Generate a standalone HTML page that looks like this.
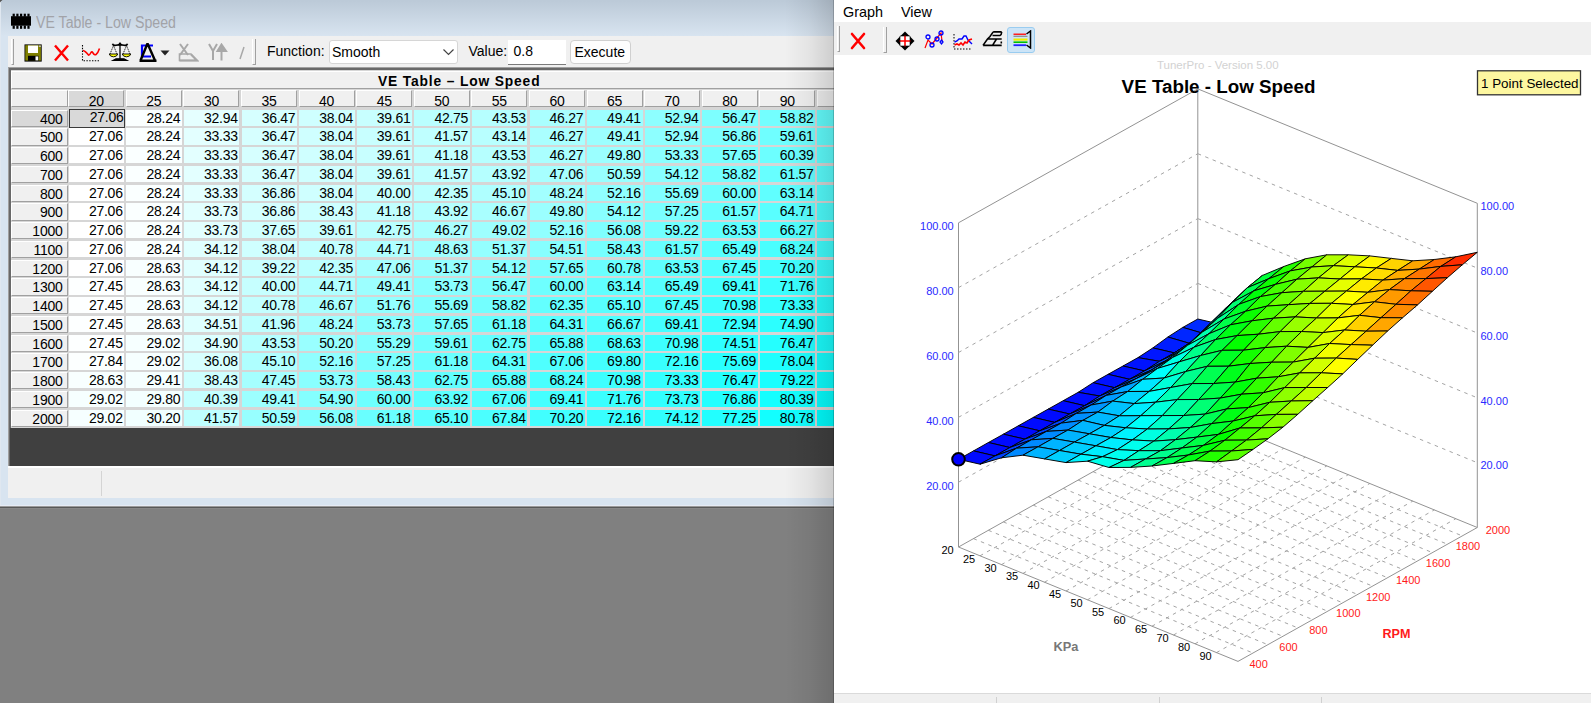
<!DOCTYPE html><html><head><meta charset="utf-8"><style>
*{box-sizing:border-box}
body{margin:0;width:1591px;height:703px;overflow:hidden;position:relative;background:#808080;font-family:"Liberation Sans",sans-serif;}
.a{position:absolute}
.c{position:absolute;height:16.3px;font-size:14px;letter-spacing:-0.25px;line-height:17.2px;text-align:right;padding-right:1.6px;color:#000;white-space:nowrap;overflow:hidden}
.h{position:absolute;background:#f0f0f0;border-top:1px solid #fff;border-left:1px solid #fff;border-right:1px solid #a0a0a0;border-bottom:1px solid #a0a0a0;font-size:14px;letter-spacing:-0.25px;line-height:20px;color:#000;white-space:nowrap;overflow:hidden}
</style></head><body>

<div class="a" style="left:0;top:0;width:834px;height:506px;background:#d8e4f0;overflow:hidden">
<div class="a" style="left:0;top:0;width:834px;height:36px;background:linear-gradient(#bccad8 1px,#d8e4f0)"></div>
<div class="a" style="left:0;top:0;width:1px;height:505px;background:#dfe7f0"></div>
<div class="a" style="left:0;top:0;width:3px;height:3px;background:radial-gradient(circle at 3px 3px,rgba(0,0,0,0) 2.5px,#555 3px)"></div>
<svg class="a" style="left:10px;top:13px" width="22" height="17" viewBox="0 0 22 17"><rect x="1" y="3.2" width="20" height="9.5" fill="#000"/><rect x="2.6" y="0.7" width="2.2" height="3" fill="#000"/><rect x="2.6" y="12.5" width="2.2" height="3.3" fill="#000"/><rect x="6.3" y="0.7" width="2.2" height="3" fill="#000"/><rect x="6.3" y="12.5" width="2.2" height="3.3" fill="#000"/><rect x="10.0" y="0.7" width="2.2" height="3" fill="#000"/><rect x="10.0" y="12.5" width="2.2" height="3.3" fill="#000"/><rect x="13.7" y="0.7" width="2.2" height="3" fill="#000"/><rect x="13.7" y="12.5" width="2.2" height="3.3" fill="#000"/><rect x="17.4" y="0.7" width="2.2" height="3" fill="#000"/><rect x="17.4" y="12.5" width="2.2" height="3.3" fill="#000"/></svg>
<div class="a" style="left:35.60px;top:12.53px;font-size:15.80px;line-height:20px;white-space:nowrap;color:#a2a3a8;transform:scaleX(0.897);transform-origin:0 0">VE Table - Low Speed</div>
<div class="a" style="left:8px;top:36px;width:826px;height:32px;background:#f0f0f0"></div>
<div class="a" style="left:11px;top:39px;width:3px;height:26px;border-left:1px solid #fff;border-right:1px solid #a0a0a0;border-bottom:1px solid #a0a0a0"></div>
<div class="a" style="left:252px;top:39px;width:4px;height:26px;border-left:1px solid #fff;border-right:1px solid #a0a0a0;border-bottom:1px solid #a0a0a0"></div>
<svg class="a" style="left:24px;top:43.5px" width="18" height="18" viewBox="0 0 18 18"><rect x="0.5" y="0.4" width="17.2" height="17.2" fill="#000"/><rect x="1.3" y="1.2" width="15.6" height="15.4" fill="#808000"/><rect x="4" y="1.5" width="10" height="7.5" fill="#fff"/><rect x="14.8" y="1.5" width="2" height="1.5" fill="#c0c0c0"/><rect x="4" y="11.8" width="10.6" height="5" fill="#000"/><rect x="11.5" y="12.4" width="2.7" height="4" fill="#fff"/></svg>
<svg class="a" style="left:53px;top:44px" width="17" height="18" viewBox="0 0 17 18"><path d="M2 1.5 L15 16.5 M15 1.5 L2 16.5" stroke="#ff0000" stroke-width="2.4"/></svg>
<svg class="a" style="left:81px;top:44px" width="20" height="18" viewBox="0 0 20 18"><path d="M1.5 1 V16.7 H19" fill="none" stroke="#000" stroke-width="1.1" stroke-dasharray="1.4 1.4"/><path d="M2 6.5 Q4 6.8 7.5 11 Q8.5 11.5 10 8.5 Q11 7 12 9 Q13.5 11.5 15 10.5 Q17 9 18.5 4.5" fill="none" stroke="#ff0000" stroke-width="1.6"/></svg>
<svg class="a" style="left:108px;top:41px" width="24" height="21" viewBox="0 0 24 21"><path d="M12 2.5 V19" stroke="#3a3a3a" stroke-width="1.7"/><path d="M12 1 L9.5 4.3 H14.5 Z" fill="#000"/><path d="M4.5 2.8 Q5 4.8 8 4.3 L12 3.6 L16 4.3 Q19 4.8 19.5 2.8" fill="none" stroke="#000" stroke-width="1.6"/><path d="M5.5 4.5 L1.8 13.5 M5.5 4.5 L9.2 13.5 M18.5 4.5 L14.8 13.5 M18.5 4.5 L22.2 13.5" stroke="#000" stroke-width="0.9" stroke-dasharray="1.2 0.8"/><path d="M1.2 13 H9.8 Q9 15.8 5.5 15.8 Q2 15.8 1.2 13 Z M14.2 13 H22.8 Q22 15.8 18.5 15.8 Q15 15.8 14.2 13 Z" fill="#ffff00" stroke="#000" stroke-width="0.9"/><path d="M5 19.5 H19 L16 17.8 H8 Z" fill="#000" stroke="#000" stroke-width="1.2"/></svg>
<svg class="a" style="left:138px;top:42.5px" width="34" height="20" viewBox="0 0 34 20"><path d="M15 2.5 H4 V13.5 H13" fill="none" stroke="#0000ff" stroke-width="2.2"/><path d="M9.5 0.5 L2.5 17.5 M9.5 0.5 L17 17.5 M1.5 17.8 H18.5" stroke="#000" stroke-width="2.4" fill="none"/><path d="M22.5 7.5 L31.5 7.5 L27 12.5 Z" fill="#222"/></svg>
<svg class="a" style="left:178px;top:43px" width="21" height="19" viewBox="0 0 21 19"><path d="M2 1 L10 12 M10 1 L2 12 M1.5 17.5 H19 L13 11.5" stroke="#a8a8a8" stroke-width="2" fill="none"/><path d="M1.5 11 V17.5 H19 L13 11 Z" fill="none" stroke="#a8a8a8" stroke-width="1.6"/></svg>
<svg class="a" style="left:207px;top:43px" width="21" height="19" viewBox="0 0 21 19"><path d="M2 1 L6 8 L10 1 M6 8 V17" stroke="#a8a8a8" stroke-width="2" fill="none"/><path d="M14.5 17.5 V5 M10.5 8 L14.5 1.5 L19 8 Z" stroke="#a8a8a8" stroke-width="2" fill="#a8a8a8"/></svg>
<svg class="a" style="left:238px;top:45px" width="8" height="16" viewBox="0 0 8 16"><path d="M6 2 L2 14" stroke="#a8a8a8" stroke-width="1.5"/></svg>
<div class="a" style="left:267.00px;top:42.15px;font-size:14.00px;line-height:18px;white-space:nowrap;">Function:</div>
<div class="a" style="left:329px;top:40px;width:129px;height:24px;background:#fff;border:1px solid #d6d6d6;border-radius:3px"></div>
<div class="a" style="left:332.00px;top:42.65px;font-size:14.00px;line-height:18px;white-space:nowrap;">Smooth</div>
<svg class="a" style="left:442px;top:48px" width="13" height="8"><path d="M1.5 1.5 L6.5 6.5 L11.5 1.5" fill="none" stroke="#444" stroke-width="1.2"/></svg>
<div class="a" style="left:468.50px;top:42.15px;font-size:14.00px;line-height:18px;white-space:nowrap;">Value:</div>
<div class="a" style="left:508px;top:40px;width:58px;height:25px;background:#fff;border-bottom:1.5px solid #7a7a7a"></div>
<div class="a" style="left:513.50px;top:42.15px;font-size:14.00px;line-height:18px;white-space:nowrap;">0.8</div>
<div class="a" style="left:570px;top:40px;width:61px;height:24px;background:#fdfdfd;border:1px solid #d0d0d0;border-radius:4px"></div>
<div class="a" style="left:574.50px;top:43.15px;font-size:14.00px;line-height:18px;white-space:nowrap;">Execute</div>
<div class="a" style="left:8px;top:67px;width:830px;height:401px;border-top:1.4px solid #a0a0a0;border-left:1.4px solid #a0a0a0;background:#696969"></div>
<div class="a" style="left:10.5px;top:70px;width:830px;height:398px;background:#d6d6d6"></div>
<div class="a" style="left:10px;top:428px;width:830px;height:38px;background:#404040"></div>
<div class="a" style="left:8px;top:466px;width:830px;height:2px;background:#fff"></div>
<div class="h" style="left:11px;top:71px;width:830px;height:18.2px"></div>
<div class="a" style="left:378.00px;top:72.92px;font-size:13.80px;line-height:17px;white-space:nowrap;font-weight:bold;letter-spacing:0.85px">VE Table &#8211; Low Speed</div>
<div class="h" style="left:11px;top:90.3px;width:56.5px;height:17.2px"></div>
<div class="h" style="left:68.30px;top:90.3px;width:56px;height:17.2px;background:#d9d9d9;text-align:center">20</div>
<div class="h" style="left:125.88px;top:90.3px;width:56px;height:17.2px;background:#f0f0f0;text-align:center">25</div>
<div class="h" style="left:183.46px;top:90.3px;width:56px;height:17.2px;background:#f0f0f0;text-align:center">30</div>
<div class="h" style="left:241.04px;top:90.3px;width:56px;height:17.2px;background:#f0f0f0;text-align:center">35</div>
<div class="h" style="left:298.62px;top:90.3px;width:56px;height:17.2px;background:#f0f0f0;text-align:center">40</div>
<div class="h" style="left:356.20px;top:90.3px;width:56px;height:17.2px;background:#f0f0f0;text-align:center">45</div>
<div class="h" style="left:413.78px;top:90.3px;width:56px;height:17.2px;background:#f0f0f0;text-align:center">50</div>
<div class="h" style="left:471.36px;top:90.3px;width:56px;height:17.2px;background:#f0f0f0;text-align:center">55</div>
<div class="h" style="left:528.94px;top:90.3px;width:56px;height:17.2px;background:#f0f0f0;text-align:center">60</div>
<div class="h" style="left:586.52px;top:90.3px;width:56px;height:17.2px;background:#f0f0f0;text-align:center">65</div>
<div class="h" style="left:644.10px;top:90.3px;width:56px;height:17.2px;background:#f0f0f0;text-align:center">70</div>
<div class="h" style="left:701.68px;top:90.3px;width:56px;height:17.2px;background:#f0f0f0;text-align:center">80</div>
<div class="h" style="left:759.26px;top:90.3px;width:56px;height:17.2px;background:#f0f0f0;text-align:center">90</div>
<div class="h" style="left:816.84px;top:90.3px;width:56px;height:17.2px;background:#f0f0f0;text-align:center"></div>
<div class="h" style="left:11px;top:109.70px;width:56.5px;height:17.2px;background:#d9d9d9;text-align:right;padding-right:4px;line-height:17.8px">400</div>
<div class="c" style="left:68.60px;top:109.20px;width:56.5px;height:18.4px;background:#d9d9d9;border:1.6px solid #3a3a3a;line-height:15.6px;padding-right:0.5px">27.06</div>
<div class="c" style="left:126.48px;top:109.70px;width:55.4px;background:#faffff">28.24</div>
<div class="c" style="left:184.06px;top:109.70px;width:55.4px;background:#e5ffff">32.94</div>
<div class="c" style="left:241.64px;top:109.70px;width:55.4px;background:#d6ffff">36.47</div>
<div class="c" style="left:299.22px;top:109.70px;width:55.4px;background:#cfffff">38.04</div>
<div class="c" style="left:356.80px;top:109.70px;width:55.4px;background:#c8ffff">39.61</div>
<div class="c" style="left:414.38px;top:109.70px;width:55.4px;background:#baffff">42.75</div>
<div class="c" style="left:471.96px;top:109.70px;width:55.4px;background:#b6ffff">43.53</div>
<div class="c" style="left:529.54px;top:109.70px;width:55.4px;background:#aaffff">46.27</div>
<div class="c" style="left:587.12px;top:109.70px;width:55.4px;background:#9cffff">49.41</div>
<div class="c" style="left:644.70px;top:109.70px;width:55.4px;background:#8dffff">52.94</div>
<div class="c" style="left:702.28px;top:109.70px;width:55.4px;background:#7dffff">56.47</div>
<div class="c" style="left:759.86px;top:109.70px;width:55.4px;background:#73ffff">58.82</div>
<div class="c" style="left:817.44px;top:109.70px;width:55.4px;background:#64ffff"></div>
<div class="h" style="left:11px;top:128.45px;width:56.5px;height:17.2px;background:#f0f0f0;text-align:right;padding-right:4px;line-height:17.8px">500</div>
<div class="c" style="left:68.90px;top:128.45px;width:55.4px;background:#ffffff">27.06</div>
<div class="c" style="left:126.48px;top:128.45px;width:55.4px;background:#faffff">28.24</div>
<div class="c" style="left:184.06px;top:128.45px;width:55.4px;background:#e3ffff">33.33</div>
<div class="c" style="left:241.64px;top:128.45px;width:55.4px;background:#d6ffff">36.47</div>
<div class="c" style="left:299.22px;top:128.45px;width:55.4px;background:#cfffff">38.04</div>
<div class="c" style="left:356.80px;top:128.45px;width:55.4px;background:#c8ffff">39.61</div>
<div class="c" style="left:414.38px;top:128.45px;width:55.4px;background:#bfffff">41.57</div>
<div class="c" style="left:471.96px;top:128.45px;width:55.4px;background:#b8ffff">43.14</div>
<div class="c" style="left:529.54px;top:128.45px;width:55.4px;background:#aaffff">46.27</div>
<div class="c" style="left:587.12px;top:128.45px;width:55.4px;background:#9cffff">49.41</div>
<div class="c" style="left:644.70px;top:128.45px;width:55.4px;background:#8dffff">52.94</div>
<div class="c" style="left:702.28px;top:128.45px;width:55.4px;background:#7cffff">56.86</div>
<div class="c" style="left:759.86px;top:128.45px;width:55.4px;background:#6fffff">59.61</div>
<div class="c" style="left:817.44px;top:128.45px;width:55.4px;background:#61ffff"></div>
<div class="h" style="left:11px;top:147.20px;width:56.5px;height:17.2px;background:#f0f0f0;text-align:right;padding-right:4px;line-height:17.8px">600</div>
<div class="c" style="left:68.90px;top:147.20px;width:55.4px;background:#ffffff">27.06</div>
<div class="c" style="left:126.48px;top:147.20px;width:55.4px;background:#faffff">28.24</div>
<div class="c" style="left:184.06px;top:147.20px;width:55.4px;background:#e3ffff">33.33</div>
<div class="c" style="left:241.64px;top:147.20px;width:55.4px;background:#d6ffff">36.47</div>
<div class="c" style="left:299.22px;top:147.20px;width:55.4px;background:#cfffff">38.04</div>
<div class="c" style="left:356.80px;top:147.20px;width:55.4px;background:#c8ffff">39.61</div>
<div class="c" style="left:414.38px;top:147.20px;width:55.4px;background:#c1ffff">41.18</div>
<div class="c" style="left:471.96px;top:147.20px;width:55.4px;background:#b6ffff">43.53</div>
<div class="c" style="left:529.54px;top:147.20px;width:55.4px;background:#aaffff">46.27</div>
<div class="c" style="left:587.12px;top:147.20px;width:55.4px;background:#9bffff">49.80</div>
<div class="c" style="left:644.70px;top:147.20px;width:55.4px;background:#8bffff">53.33</div>
<div class="c" style="left:702.28px;top:147.20px;width:55.4px;background:#78ffff">57.65</div>
<div class="c" style="left:759.86px;top:147.20px;width:55.4px;background:#6cffff">60.39</div>
<div class="c" style="left:817.44px;top:147.20px;width:55.4px;background:#5effff"></div>
<div class="h" style="left:11px;top:165.95px;width:56.5px;height:17.2px;background:#f0f0f0;text-align:right;padding-right:4px;line-height:17.8px">700</div>
<div class="c" style="left:68.90px;top:165.95px;width:55.4px;background:#ffffff">27.06</div>
<div class="c" style="left:126.48px;top:165.95px;width:55.4px;background:#faffff">28.24</div>
<div class="c" style="left:184.06px;top:165.95px;width:55.4px;background:#e3ffff">33.33</div>
<div class="c" style="left:241.64px;top:165.95px;width:55.4px;background:#d6ffff">36.47</div>
<div class="c" style="left:299.22px;top:165.95px;width:55.4px;background:#cfffff">38.04</div>
<div class="c" style="left:356.80px;top:165.95px;width:55.4px;background:#c8ffff">39.61</div>
<div class="c" style="left:414.38px;top:165.95px;width:55.4px;background:#bfffff">41.57</div>
<div class="c" style="left:471.96px;top:165.95px;width:55.4px;background:#b5ffff">43.92</div>
<div class="c" style="left:529.54px;top:165.95px;width:55.4px;background:#a7ffff">47.06</div>
<div class="c" style="left:587.12px;top:165.95px;width:55.4px;background:#97ffff">50.59</div>
<div class="c" style="left:644.70px;top:165.95px;width:55.4px;background:#88ffff">54.12</div>
<div class="c" style="left:702.28px;top:165.95px;width:55.4px;background:#73ffff">58.82</div>
<div class="c" style="left:759.86px;top:165.95px;width:55.4px;background:#67ffff">61.57</div>
<div class="c" style="left:817.44px;top:165.95px;width:55.4px;background:#5affff"></div>
<div class="h" style="left:11px;top:184.70px;width:56.5px;height:17.2px;background:#f0f0f0;text-align:right;padding-right:4px;line-height:17.8px">800</div>
<div class="c" style="left:68.90px;top:184.70px;width:55.4px;background:#ffffff">27.06</div>
<div class="c" style="left:126.48px;top:184.70px;width:55.4px;background:#faffff">28.24</div>
<div class="c" style="left:184.06px;top:184.70px;width:55.4px;background:#e3ffff">33.33</div>
<div class="c" style="left:241.64px;top:184.70px;width:55.4px;background:#d4ffff">36.86</div>
<div class="c" style="left:299.22px;top:184.70px;width:55.4px;background:#cfffff">38.04</div>
<div class="c" style="left:356.80px;top:184.70px;width:55.4px;background:#c6ffff">40.00</div>
<div class="c" style="left:414.38px;top:184.70px;width:55.4px;background:#bcffff">42.35</div>
<div class="c" style="left:471.96px;top:184.70px;width:55.4px;background:#afffff">45.10</div>
<div class="c" style="left:529.54px;top:184.70px;width:55.4px;background:#a2ffff">48.24</div>
<div class="c" style="left:587.12px;top:184.70px;width:55.4px;background:#90ffff">52.16</div>
<div class="c" style="left:644.70px;top:184.70px;width:55.4px;background:#81ffff">55.69</div>
<div class="c" style="left:702.28px;top:184.70px;width:55.4px;background:#6effff">60.00</div>
<div class="c" style="left:759.86px;top:184.70px;width:55.4px;background:#60ffff">63.14</div>
<div class="c" style="left:817.44px;top:184.70px;width:55.4px;background:#54ffff"></div>
<div class="h" style="left:11px;top:203.45px;width:56.5px;height:17.2px;background:#f0f0f0;text-align:right;padding-right:4px;line-height:17.8px">900</div>
<div class="c" style="left:68.90px;top:203.45px;width:55.4px;background:#ffffff">27.06</div>
<div class="c" style="left:126.48px;top:203.45px;width:55.4px;background:#faffff">28.24</div>
<div class="c" style="left:184.06px;top:203.45px;width:55.4px;background:#e2ffff">33.73</div>
<div class="c" style="left:241.64px;top:203.45px;width:55.4px;background:#d4ffff">36.86</div>
<div class="c" style="left:299.22px;top:203.45px;width:55.4px;background:#cdffff">38.43</div>
<div class="c" style="left:356.80px;top:203.45px;width:55.4px;background:#c1ffff">41.18</div>
<div class="c" style="left:414.38px;top:203.45px;width:55.4px;background:#b5ffff">43.92</div>
<div class="c" style="left:471.96px;top:203.45px;width:55.4px;background:#a9ffff">46.67</div>
<div class="c" style="left:529.54px;top:203.45px;width:55.4px;background:#9bffff">49.80</div>
<div class="c" style="left:587.12px;top:203.45px;width:55.4px;background:#88ffff">54.12</div>
<div class="c" style="left:644.70px;top:203.45px;width:55.4px;background:#7affff">57.25</div>
<div class="c" style="left:702.28px;top:203.45px;width:55.4px;background:#67ffff">61.57</div>
<div class="c" style="left:759.86px;top:203.45px;width:55.4px;background:#59ffff">64.71</div>
<div class="c" style="left:817.44px;top:203.45px;width:55.4px;background:#4dffff"></div>
<div class="h" style="left:11px;top:222.20px;width:56.5px;height:17.2px;background:#f0f0f0;text-align:right;padding-right:4px;line-height:17.8px">1000</div>
<div class="c" style="left:68.90px;top:222.20px;width:55.4px;background:#ffffff">27.06</div>
<div class="c" style="left:126.48px;top:222.20px;width:55.4px;background:#faffff">28.24</div>
<div class="c" style="left:184.06px;top:222.20px;width:55.4px;background:#e2ffff">33.73</div>
<div class="c" style="left:241.64px;top:222.20px;width:55.4px;background:#d0ffff">37.65</div>
<div class="c" style="left:299.22px;top:222.20px;width:55.4px;background:#c8ffff">39.61</div>
<div class="c" style="left:356.80px;top:222.20px;width:55.4px;background:#baffff">42.75</div>
<div class="c" style="left:414.38px;top:222.20px;width:55.4px;background:#aaffff">46.27</div>
<div class="c" style="left:471.96px;top:222.20px;width:55.4px;background:#9effff">49.02</div>
<div class="c" style="left:529.54px;top:222.20px;width:55.4px;background:#90ffff">52.16</div>
<div class="c" style="left:587.12px;top:222.20px;width:55.4px;background:#7fffff">56.08</div>
<div class="c" style="left:644.70px;top:222.20px;width:55.4px;background:#71ffff">59.22</div>
<div class="c" style="left:702.28px;top:222.20px;width:55.4px;background:#5effff">63.53</div>
<div class="c" style="left:759.86px;top:222.20px;width:55.4px;background:#52ffff">66.27</div>
<div class="c" style="left:817.44px;top:222.20px;width:55.4px;background:#46ffff"></div>
<div class="h" style="left:11px;top:240.95px;width:56.5px;height:17.2px;background:#f0f0f0;text-align:right;padding-right:4px;line-height:17.8px">1100</div>
<div class="c" style="left:68.90px;top:240.95px;width:55.4px;background:#ffffff">27.06</div>
<div class="c" style="left:126.48px;top:240.95px;width:55.4px;background:#faffff">28.24</div>
<div class="c" style="left:184.06px;top:240.95px;width:55.4px;background:#e0ffff">34.12</div>
<div class="c" style="left:241.64px;top:240.95px;width:55.4px;background:#cfffff">38.04</div>
<div class="c" style="left:299.22px;top:240.95px;width:55.4px;background:#c3ffff">40.78</div>
<div class="c" style="left:356.80px;top:240.95px;width:55.4px;background:#b1ffff">44.71</div>
<div class="c" style="left:414.38px;top:240.95px;width:55.4px;background:#a0ffff">48.63</div>
<div class="c" style="left:471.96px;top:240.95px;width:55.4px;background:#94ffff">51.37</div>
<div class="c" style="left:529.54px;top:240.95px;width:55.4px;background:#86ffff">54.51</div>
<div class="c" style="left:587.12px;top:240.95px;width:55.4px;background:#75ffff">58.43</div>
<div class="c" style="left:644.70px;top:240.95px;width:55.4px;background:#67ffff">61.57</div>
<div class="c" style="left:702.28px;top:240.95px;width:55.4px;background:#56ffff">65.49</div>
<div class="c" style="left:759.86px;top:240.95px;width:55.4px;background:#49ffff">68.24</div>
<div class="c" style="left:817.44px;top:240.95px;width:55.4px;background:#3fffff"></div>
<div class="h" style="left:11px;top:259.70px;width:56.5px;height:17.2px;background:#f0f0f0;text-align:right;padding-right:4px;line-height:17.8px">1200</div>
<div class="c" style="left:68.90px;top:259.70px;width:55.4px;background:#ffffff">27.06</div>
<div class="c" style="left:126.48px;top:259.70px;width:55.4px;background:#f8ffff">28.63</div>
<div class="c" style="left:184.06px;top:259.70px;width:55.4px;background:#e0ffff">34.12</div>
<div class="c" style="left:241.64px;top:259.70px;width:55.4px;background:#c9ffff">39.22</div>
<div class="c" style="left:299.22px;top:259.70px;width:55.4px;background:#bcffff">42.35</div>
<div class="c" style="left:356.80px;top:259.70px;width:55.4px;background:#a7ffff">47.06</div>
<div class="c" style="left:414.38px;top:259.70px;width:55.4px;background:#94ffff">51.37</div>
<div class="c" style="left:471.96px;top:259.70px;width:55.4px;background:#88ffff">54.12</div>
<div class="c" style="left:529.54px;top:259.70px;width:55.4px;background:#78ffff">57.65</div>
<div class="c" style="left:587.12px;top:259.70px;width:55.4px;background:#6affff">60.78</div>
<div class="c" style="left:644.70px;top:259.70px;width:55.4px;background:#5effff">63.53</div>
<div class="c" style="left:702.28px;top:259.70px;width:55.4px;background:#4dffff">67.45</div>
<div class="c" style="left:759.86px;top:259.70px;width:55.4px;background:#41ffff">70.20</div>
<div class="c" style="left:817.44px;top:259.70px;width:55.4px;background:#37ffff"></div>
<div class="h" style="left:11px;top:278.45px;width:56.5px;height:17.2px;background:#f0f0f0;text-align:right;padding-right:4px;line-height:17.8px">1300</div>
<div class="c" style="left:68.90px;top:278.45px;width:55.4px;background:#fdffff">27.45</div>
<div class="c" style="left:126.48px;top:278.45px;width:55.4px;background:#f8ffff">28.63</div>
<div class="c" style="left:184.06px;top:278.45px;width:55.4px;background:#e0ffff">34.12</div>
<div class="c" style="left:241.64px;top:278.45px;width:55.4px;background:#c6ffff">40.00</div>
<div class="c" style="left:299.22px;top:278.45px;width:55.4px;background:#b1ffff">44.71</div>
<div class="c" style="left:356.80px;top:278.45px;width:55.4px;background:#9cffff">49.41</div>
<div class="c" style="left:414.38px;top:278.45px;width:55.4px;background:#89ffff">53.73</div>
<div class="c" style="left:471.96px;top:278.45px;width:55.4px;background:#7dffff">56.47</div>
<div class="c" style="left:529.54px;top:278.45px;width:55.4px;background:#6effff">60.00</div>
<div class="c" style="left:587.12px;top:278.45px;width:55.4px;background:#60ffff">63.14</div>
<div class="c" style="left:644.70px;top:278.45px;width:55.4px;background:#56ffff">65.49</div>
<div class="c" style="left:702.28px;top:278.45px;width:55.4px;background:#44ffff">69.41</div>
<div class="c" style="left:759.86px;top:278.45px;width:55.4px;background:#3affff">71.76</div>
<div class="c" style="left:817.44px;top:278.45px;width:55.4px;background:#2fffff"></div>
<div class="h" style="left:11px;top:297.20px;width:56.5px;height:17.2px;background:#f0f0f0;text-align:right;padding-right:4px;line-height:17.8px">1400</div>
<div class="c" style="left:68.90px;top:297.20px;width:55.4px;background:#fdffff">27.45</div>
<div class="c" style="left:126.48px;top:297.20px;width:55.4px;background:#f8ffff">28.63</div>
<div class="c" style="left:184.06px;top:297.20px;width:55.4px;background:#e0ffff">34.12</div>
<div class="c" style="left:241.64px;top:297.20px;width:55.4px;background:#c3ffff">40.78</div>
<div class="c" style="left:299.22px;top:297.20px;width:55.4px;background:#a9ffff">46.67</div>
<div class="c" style="left:356.80px;top:297.20px;width:55.4px;background:#92ffff">51.76</div>
<div class="c" style="left:414.38px;top:297.20px;width:55.4px;background:#81ffff">55.69</div>
<div class="c" style="left:471.96px;top:297.20px;width:55.4px;background:#73ffff">58.82</div>
<div class="c" style="left:529.54px;top:297.20px;width:55.4px;background:#63ffff">62.35</div>
<div class="c" style="left:587.12px;top:297.20px;width:55.4px;background:#57ffff">65.10</div>
<div class="c" style="left:644.70px;top:297.20px;width:55.4px;background:#4dffff">67.45</div>
<div class="c" style="left:702.28px;top:297.20px;width:55.4px;background:#3dffff">70.98</div>
<div class="c" style="left:759.86px;top:297.20px;width:55.4px;background:#33ffff">73.33</div>
<div class="c" style="left:817.44px;top:297.20px;width:55.4px;background:#27ffff"></div>
<div class="h" style="left:11px;top:315.95px;width:56.5px;height:17.2px;background:#f0f0f0;text-align:right;padding-right:4px;line-height:17.8px">1500</div>
<div class="c" style="left:68.90px;top:315.95px;width:55.4px;background:#fdffff">27.45</div>
<div class="c" style="left:126.48px;top:315.95px;width:55.4px;background:#f8ffff">28.63</div>
<div class="c" style="left:184.06px;top:315.95px;width:55.4px;background:#deffff">34.51</div>
<div class="c" style="left:241.64px;top:315.95px;width:55.4px;background:#bdffff">41.96</div>
<div class="c" style="left:299.22px;top:315.95px;width:55.4px;background:#a2ffff">48.24</div>
<div class="c" style="left:356.80px;top:315.95px;width:55.4px;background:#89ffff">53.73</div>
<div class="c" style="left:414.38px;top:315.95px;width:55.4px;background:#78ffff">57.65</div>
<div class="c" style="left:471.96px;top:315.95px;width:55.4px;background:#69ffff">61.18</div>
<div class="c" style="left:529.54px;top:315.95px;width:55.4px;background:#5bffff">64.31</div>
<div class="c" style="left:587.12px;top:315.95px;width:55.4px;background:#50ffff">66.67</div>
<div class="c" style="left:644.70px;top:315.95px;width:55.4px;background:#44ffff">69.41</div>
<div class="c" style="left:702.28px;top:315.95px;width:55.4px;background:#35ffff">72.94</div>
<div class="c" style="left:759.86px;top:315.95px;width:55.4px;background:#2cffff">74.90</div>
<div class="c" style="left:817.44px;top:315.95px;width:55.4px;background:#20ffff"></div>
<div class="h" style="left:11px;top:334.70px;width:56.5px;height:17.2px;background:#f0f0f0;text-align:right;padding-right:4px;line-height:17.8px">1600</div>
<div class="c" style="left:68.90px;top:334.70px;width:55.4px;background:#fdffff">27.45</div>
<div class="c" style="left:126.48px;top:334.70px;width:55.4px;background:#f6ffff">29.02</div>
<div class="c" style="left:184.06px;top:334.70px;width:55.4px;background:#dcffff">34.90</div>
<div class="c" style="left:241.64px;top:334.70px;width:55.4px;background:#b6ffff">43.53</div>
<div class="c" style="left:299.22px;top:334.70px;width:55.4px;background:#99ffff">50.20</div>
<div class="c" style="left:356.80px;top:334.70px;width:55.4px;background:#83ffff">55.29</div>
<div class="c" style="left:414.38px;top:334.70px;width:55.4px;background:#6fffff">59.61</div>
<div class="c" style="left:471.96px;top:334.70px;width:55.4px;background:#62ffff">62.75</div>
<div class="c" style="left:529.54px;top:334.70px;width:55.4px;background:#54ffff">65.88</div>
<div class="c" style="left:587.12px;top:334.70px;width:55.4px;background:#48ffff">68.63</div>
<div class="c" style="left:644.70px;top:334.70px;width:55.4px;background:#3dffff">70.98</div>
<div class="c" style="left:702.28px;top:334.70px;width:55.4px;background:#2effff">74.51</div>
<div class="c" style="left:759.86px;top:334.70px;width:55.4px;background:#25ffff">76.47</div>
<div class="c" style="left:817.44px;top:334.70px;width:55.4px;background:#1affff"></div>
<div class="h" style="left:11px;top:353.45px;width:56.5px;height:17.2px;background:#f0f0f0;text-align:right;padding-right:4px;line-height:17.8px">1700</div>
<div class="c" style="left:68.90px;top:353.45px;width:55.4px;background:#fcffff">27.84</div>
<div class="c" style="left:126.48px;top:353.45px;width:55.4px;background:#f6ffff">29.02</div>
<div class="c" style="left:184.06px;top:353.45px;width:55.4px;background:#d7ffff">36.08</div>
<div class="c" style="left:241.64px;top:353.45px;width:55.4px;background:#afffff">45.10</div>
<div class="c" style="left:299.22px;top:353.45px;width:55.4px;background:#90ffff">52.16</div>
<div class="c" style="left:356.80px;top:353.45px;width:55.4px;background:#7affff">57.25</div>
<div class="c" style="left:414.38px;top:353.45px;width:55.4px;background:#69ffff">61.18</div>
<div class="c" style="left:471.96px;top:353.45px;width:55.4px;background:#5bffff">64.31</div>
<div class="c" style="left:529.54px;top:353.45px;width:55.4px;background:#4fffff">67.06</div>
<div class="c" style="left:587.12px;top:353.45px;width:55.4px;background:#43ffff">69.80</div>
<div class="c" style="left:644.70px;top:353.45px;width:55.4px;background:#38ffff">72.16</div>
<div class="c" style="left:702.28px;top:353.45px;width:55.4px;background:#29ffff">75.69</div>
<div class="c" style="left:759.86px;top:353.45px;width:55.4px;background:#1effff">78.04</div>
<div class="c" style="left:817.44px;top:353.45px;width:55.4px;background:#13ffff"></div>
<div class="h" style="left:11px;top:372.20px;width:56.5px;height:17.2px;background:#f0f0f0;text-align:right;padding-right:4px;line-height:17.8px">1800</div>
<div class="c" style="left:68.90px;top:372.20px;width:55.4px;background:#f8ffff">28.63</div>
<div class="c" style="left:126.48px;top:372.20px;width:55.4px;background:#f5ffff">29.41</div>
<div class="c" style="left:184.06px;top:372.20px;width:55.4px;background:#cdffff">38.43</div>
<div class="c" style="left:241.64px;top:372.20px;width:55.4px;background:#a5ffff">47.45</div>
<div class="c" style="left:299.22px;top:372.20px;width:55.4px;background:#89ffff">53.73</div>
<div class="c" style="left:356.80px;top:372.20px;width:55.4px;background:#75ffff">58.43</div>
<div class="c" style="left:414.38px;top:372.20px;width:55.4px;background:#62ffff">62.75</div>
<div class="c" style="left:471.96px;top:372.20px;width:55.4px;background:#54ffff">65.88</div>
<div class="c" style="left:529.54px;top:372.20px;width:55.4px;background:#49ffff">68.24</div>
<div class="c" style="left:587.12px;top:372.20px;width:55.4px;background:#3dffff">70.98</div>
<div class="c" style="left:644.70px;top:372.20px;width:55.4px;background:#33ffff">73.33</div>
<div class="c" style="left:702.28px;top:372.20px;width:55.4px;background:#25ffff">76.47</div>
<div class="c" style="left:759.86px;top:372.20px;width:55.4px;background:#19ffff">79.22</div>
<div class="c" style="left:817.44px;top:372.20px;width:55.4px;background:#0cffff"></div>
<div class="h" style="left:11px;top:390.95px;width:56.5px;height:17.2px;background:#f0f0f0;text-align:right;padding-right:4px;line-height:17.8px">1900</div>
<div class="c" style="left:68.90px;top:390.95px;width:55.4px;background:#f6ffff">29.02</div>
<div class="c" style="left:126.48px;top:390.95px;width:55.4px;background:#f3ffff">29.80</div>
<div class="c" style="left:184.06px;top:390.95px;width:55.4px;background:#c4ffff">40.39</div>
<div class="c" style="left:241.64px;top:390.95px;width:55.4px;background:#9cffff">49.41</div>
<div class="c" style="left:299.22px;top:390.95px;width:55.4px;background:#84ffff">54.90</div>
<div class="c" style="left:356.80px;top:390.95px;width:55.4px;background:#6effff">60.00</div>
<div class="c" style="left:414.38px;top:390.95px;width:55.4px;background:#5cffff">63.92</div>
<div class="c" style="left:471.96px;top:390.95px;width:55.4px;background:#4fffff">67.06</div>
<div class="c" style="left:529.54px;top:390.95px;width:55.4px;background:#44ffff">69.41</div>
<div class="c" style="left:587.12px;top:390.95px;width:55.4px;background:#3affff">71.76</div>
<div class="c" style="left:644.70px;top:390.95px;width:55.4px;background:#31ffff">73.73</div>
<div class="c" style="left:702.28px;top:390.95px;width:55.4px;background:#23ffff">76.86</div>
<div class="c" style="left:759.86px;top:390.95px;width:55.4px;background:#14ffff">80.39</div>
<div class="c" style="left:817.44px;top:390.95px;width:55.4px;background:#06ffff"></div>
<div class="h" style="left:11px;top:409.70px;width:56.5px;height:17.2px;background:#f0f0f0;text-align:right;padding-right:4px;line-height:17.8px">2000</div>
<div class="c" style="left:68.90px;top:409.70px;width:55.4px;background:#f6ffff">29.02</div>
<div class="c" style="left:126.48px;top:409.70px;width:55.4px;background:#f1ffff">30.20</div>
<div class="c" style="left:184.06px;top:409.70px;width:55.4px;background:#bfffff">41.57</div>
<div class="c" style="left:241.64px;top:409.70px;width:55.4px;background:#97ffff">50.59</div>
<div class="c" style="left:299.22px;top:409.70px;width:55.4px;background:#7fffff">56.08</div>
<div class="c" style="left:356.80px;top:409.70px;width:55.4px;background:#69ffff">61.18</div>
<div class="c" style="left:414.38px;top:409.70px;width:55.4px;background:#57ffff">65.10</div>
<div class="c" style="left:471.96px;top:409.70px;width:55.4px;background:#4bffff">67.84</div>
<div class="c" style="left:529.54px;top:409.70px;width:55.4px;background:#41ffff">70.20</div>
<div class="c" style="left:587.12px;top:409.70px;width:55.4px;background:#38ffff">72.16</div>
<div class="c" style="left:644.70px;top:409.70px;width:55.4px;background:#30ffff">74.12</div>
<div class="c" style="left:702.28px;top:409.70px;width:55.4px;background:#22ffff">77.25</div>
<div class="c" style="left:759.86px;top:409.70px;width:55.4px;background:#12ffff">80.78</div>
<div class="c" style="left:817.44px;top:409.70px;width:55.4px;background:#00ffff"></div>
<div class="a" style="left:8px;top:468px;width:826px;height:29.5px;background:#f0f0f0"></div>
<div class="a" style="left:101px;top:471px;width:1px;height:25px;background:#d4d4d4"></div>
</div>
<div class="a" style="left:0;top:505px;width:834px;height:1px;background:#e6ebf5"></div>
<div class="a" style="left:0;top:506px;width:834px;height:1px;background:#9a9a9a"></div>
<div class="a" style="left:0;top:507px;width:834px;height:1px;background:#585858"></div>
<div class="a" style="left:0;top:508px;width:834px;height:1px;background:#878787"></div>
<div class="a" style="left:785px;top:0;width:48px;height:703px;background:linear-gradient(to right,rgba(0,0,0,0),rgba(0,0,0,0.05) 50%,rgba(0,0,0,0.14))"></div>
<div class="a" style="left:833px;top:0;width:1px;height:703px;background:rgba(0,0,0,0.3)"></div>
<div class="a" style="left:834px;top:0;width:757px;height:703px;background:#fff;overflow:hidden">
<div class="a" style="left:9.00px;top:1.80px;font-size:15.00px;line-height:19px;white-space:nowrap;transform:scaleX(0.96);transform-origin:0 0">Graph</div>
<div class="a" style="left:66.50px;top:1.80px;font-size:15.00px;line-height:19px;white-space:nowrap;transform:scaleX(0.96);transform-origin:0 0">View</div>
<div class="a" style="left:0;top:22px;width:757px;height:32.5px;background:#f0f0f0"></div>
<div class="a" style="left:2.5px;top:26px;width:3.5px;height:26px;border-left:1px solid #fff;border-right:1px solid #a0a0a0;border-bottom:1px solid #a0a0a0"></div>
<div class="a" style="left:49px;top:26.5px;width:3.5px;height:26px;border-left:1px solid #fff;border-right:1px solid #a0a0a0;border-bottom:1px solid #a0a0a0"></div>
<svg class="a" style="left:16px;top:32px" width="16" height="18" viewBox="0 0 16 18"><path d="M2 2 L14 16 M14 2 L2 16" stroke="#ff0000" stroke-width="2.6" stroke-linecap="round"/></svg>
<svg class="a" style="left:61px;top:31px" width="20" height="20" viewBox="0 0 20 20"><path d="M10 0.5 L19.5 10 L10 19.5 L0.5 10 Z" fill="#000"/><rect x="5" y="5" width="10" height="10" fill="#fff"/><path d="M10 4.5 V15.5 M4.5 10 H15.5" stroke="#ff0000" stroke-width="1.6"/><path d="M5 5 H15 V15 H5 Z" fill="none" stroke="#000" stroke-width="0.6"/></svg>
<svg class="a" style="left:90px;top:30px" width="21" height="20" viewBox="0 0 21 20"><path d="M1 18 L4 10 L8 14 L13 8 L17 3 L18 11" fill="none" stroke="#ff0000" stroke-width="1.2"/><g fill="none" stroke="#0000ff" stroke-width="1.3"><circle cx="4" cy="7" r="2"/><circle cx="8" cy="15" r="2"/><circle cx="13" cy="9" r="2"/><circle cx="17" cy="3" r="2"/><path d="M17.5 10 L19 12 L17.5 14 L16 12 Z"/></g></svg>
<svg class="a" style="left:119px;top:33px" width="21" height="17" viewBox="0 0 21 17"><path d="M1 1 V16 H19" fill="none" stroke="#000" stroke-width="1" stroke-dasharray="1.5 1.5"/><path d="M1.5 9 L4 8 L6 6 L9 6 L11 3 L13 3 L15 7 L17 9 L19 11" fill="none" stroke="#0000ff" stroke-width="1.4"/><path d="M1.5 12 L4 11 L6 12 L8 10 L10 12 L12 9 L14 10 L16 7 L19 6" fill="none" stroke="#ff0000" stroke-width="1.6"/></svg>
<svg class="a" style="left:144px;top:26px" width="30" height="26" viewBox="0 0 30 26"><path d="M5 19.4 H23.7 M9 13 H23.7 M15.2 5.9 H23.7 M14.5 9.5 H22 Q23.5 9 23.7 6 M5 19.4 L9.5 13 L12 10.5 L15.2 5.9 M14.5 19.4 L18.5 13 M23.3 15.5 V17.5" fill="none" stroke="#000" stroke-width="1.6"/></svg>
<div class="a" style="left:173px;top:26.5px;width:28px;height:26px;background:#cce4f7;border:1px solid #99ccf0;border-radius:3px"></div>
<svg class="a" style="left:178px;top:30px" width="20" height="19" viewBox="0 0 20 19"><rect x="1.5" y="3.5" width="12.5" height="1.6" fill="#ff2020"/><rect x="1.5" y="5.8" width="14" height="1" fill="#808080"/><rect x="1.5" y="8.5" width="14" height="2.2" fill="#f0f000"/><rect x="1.5" y="11.4" width="14" height="1.6" fill="#00c000"/><rect x="1.5" y="14.3" width="12.5" height="1.8" fill="#2020ff"/><path d="M14.5 4 L18.5 1 V18 L14.5 15" fill="none" stroke="#000" stroke-width="1.5"/></svg>
<div class="a" style="left:0;top:693px;width:757px;height:10px;background:#f0f0f0;border-top:1.5px solid #dadada"></div>
<div class="a" style="left:162.0px;top:697px;width:1px;height:6px;background:#d0d0d0"></div>
<div class="a" style="left:324.7px;top:697px;width:1px;height:6px;background:#d0d0d0"></div>
<div class="a" style="left:487.0px;top:697px;width:1px;height:6px;background:#d0d0d0"></div>
</div>
<svg class="a" style="left:0;top:0" width="1591" height="703" viewBox="0 0 1591 703">
<g fill="none" stroke="#939393" stroke-width="1">
<line x1="958.5" y1="547.0" x2="958.5" y2="222.8" />
<line x1="1197.8" y1="413.1" x2="1197.8" y2="88.9" />
<line x1="1477.3" y1="527.5" x2="1477.3" y2="203.3" />
<line x1="958.5" y1="222.8" x2="1197.8" y2="88.9" />
<line x1="1197.8" y1="88.9" x2="1477.3" y2="203.3" />
<line x1="958.5" y1="482.2" x2="1197.8" y2="348.3" stroke-dasharray="3.5 4.5" stroke="#a4a4a4"/>
<line x1="1197.8" y1="348.3" x2="1477.3" y2="462.7" stroke-dasharray="3.5 4.5" stroke="#a4a4a4"/>
<line x1="958.5" y1="417.3" x2="1197.8" y2="283.4" stroke-dasharray="3.5 4.5" stroke="#a4a4a4"/>
<line x1="1197.8" y1="283.4" x2="1477.3" y2="397.8" stroke-dasharray="3.5 4.5" stroke="#a4a4a4"/>
<line x1="958.5" y1="352.5" x2="1197.8" y2="218.6" stroke-dasharray="3.5 4.5" stroke="#a4a4a4"/>
<line x1="1197.8" y1="218.6" x2="1477.3" y2="333.0" stroke-dasharray="3.5 4.5" stroke="#a4a4a4"/>
<line x1="958.5" y1="287.6" x2="1197.8" y2="153.7" stroke-dasharray="3.5 4.5" stroke="#a4a4a4"/>
<line x1="1197.8" y1="153.7" x2="1477.3" y2="268.1" stroke-dasharray="3.5 4.5" stroke="#a4a4a4"/>
<g stroke="#a4a4a4" stroke-dasharray="3.5 4.5">
<line x1="980.0" y1="555.8" x2="1219.3" y2="421.9" />
<line x1="1001.5" y1="564.6" x2="1240.8" y2="430.7" />
<line x1="1023.0" y1="573.4" x2="1262.3" y2="439.5" />
<line x1="1044.5" y1="582.2" x2="1283.8" y2="448.3" />
<line x1="1066.0" y1="591.0" x2="1305.3" y2="457.1" />
<line x1="1087.5" y1="599.8" x2="1326.8" y2="465.9" />
<line x1="1109.0" y1="608.6" x2="1348.3" y2="474.7" />
<line x1="1130.5" y1="617.4" x2="1369.8" y2="483.5" />
<line x1="1152.0" y1="626.2" x2="1391.3" y2="492.3" />
<line x1="1173.5" y1="635.0" x2="1412.8" y2="501.1" />
<line x1="1195.0" y1="643.8" x2="1434.3" y2="509.9" />
<line x1="1216.5" y1="652.6" x2="1455.8" y2="518.7" />
<line x1="973.5" y1="538.6" x2="1253.0" y2="653.0" />
<line x1="988.4" y1="530.3" x2="1267.9" y2="644.7" />
<line x1="1003.4" y1="521.9" x2="1282.9" y2="636.3" />
<line x1="1018.3" y1="513.5" x2="1297.8" y2="627.9" />
<line x1="1033.3" y1="505.2" x2="1312.8" y2="619.6" />
<line x1="1048.2" y1="496.8" x2="1327.7" y2="611.2" />
<line x1="1063.2" y1="488.4" x2="1342.7" y2="602.8" />
<line x1="1078.2" y1="480.1" x2="1357.7" y2="594.5" />
<line x1="1093.1" y1="471.7" x2="1372.6" y2="586.1" />
<line x1="1108.1" y1="463.3" x2="1387.6" y2="577.7" />
<line x1="1123.0" y1="454.9" x2="1402.5" y2="569.3" />
<line x1="1138.0" y1="446.6" x2="1417.5" y2="561.0" />
<line x1="1152.9" y1="438.2" x2="1432.4" y2="552.6" />
<line x1="1167.9" y1="429.8" x2="1447.4" y2="544.2" />
<line x1="1182.8" y1="421.5" x2="1462.3" y2="535.9" />
</g>
<line x1="958.5" y1="547.0" x2="1238.0" y2="661.4" />
<line x1="1238.0" y1="661.4" x2="1477.3" y2="527.5" />
<line x1="958.5" y1="547.0" x2="1197.8" y2="413.1" />
<line x1="1197.8" y1="413.1" x2="1477.3" y2="527.5" />
</g>
<g stroke="#000" stroke-width="0.95" stroke-linejoin="round">
<polygon points="1182.8,327.4 1204.3,333.7 1219.3,324.0 1197.8,319.0" fill="#002bff"/>
<polygon points="1167.9,337.0 1189.4,343.3 1204.3,333.7 1182.8,327.4" fill="#0026ff"/>
<polygon points="1204.3,333.7 1225.8,308.1 1240.8,295.9 1219.3,324.0" fill="#0095ff"/>
<polygon points="1152.9,347.9 1174.4,352.9 1189.4,343.3 1167.9,337.0" fill="#001dff"/>
<polygon points="1189.4,343.3 1210.9,322.8 1225.8,308.1 1204.3,333.7" fill="#0083ff"/>
<polygon points="1225.8,308.1 1247.3,287.7 1262.3,275.5 1240.8,295.9" fill="#00ffb9"/>
<polygon points="1138.0,357.6 1159.5,361.3 1174.4,352.9 1152.9,347.9" fill="#0016ff"/>
<polygon points="1174.4,352.9 1195.9,338.8 1210.9,322.8 1189.4,343.3" fill="#006dff"/>
<polygon points="1210.9,322.8 1232.4,302.4 1247.3,287.7 1225.8,308.1" fill="#00ffd5"/>
<polygon points="1247.3,287.7 1268.8,278.7 1283.8,266.5 1262.3,275.5" fill="#00ff39"/>
<polygon points="1123.0,366.0 1144.5,370.9 1159.5,361.3 1138.0,357.6" fill="#0013ff"/>
<polygon points="1159.5,361.3 1181.0,351.0 1195.9,338.8 1174.4,352.9" fill="#005cff"/>
<polygon points="1195.9,338.8 1217.4,318.4 1232.4,302.4 1210.9,322.8" fill="#00fffb"/>
<polygon points="1232.4,302.4 1253.9,290.8 1268.8,278.7 1247.3,287.7" fill="#00ff51"/>
<polygon points="1268.8,278.7 1290.3,270.9 1305.3,258.8 1283.8,266.5" fill="#24ff00"/>
<polygon points="1108.1,374.3 1129.6,379.3 1144.5,370.9 1123.0,366.0" fill="#0011ff"/>
<polygon points="1144.5,370.9 1166.0,360.7 1181.0,351.0 1159.5,361.3" fill="#0053ff"/>
<polygon points="1181.0,351.0 1202.5,331.9 1217.4,318.4 1195.9,338.8" fill="#00e2ff"/>
<polygon points="1217.4,318.4 1238.9,304.3 1253.9,290.8 1232.4,302.4" fill="#00ff70"/>
<polygon points="1253.9,290.8 1275.4,284.4 1290.3,270.9 1268.8,278.7" fill="#0eff00"/>
<polygon points="1290.3,270.9 1311.8,267.0 1326.8,254.8 1305.3,258.8" fill="#74ff00"/>
<polygon points="1093.1,382.7 1114.6,387.7 1129.6,379.3 1108.1,374.3" fill="#0011ff"/>
<polygon points="1129.6,379.3 1151.1,370.3 1166.0,360.7 1144.5,370.9" fill="#004eff"/>
<polygon points="1166.0,360.7 1187.5,345.3 1202.5,331.9 1181.0,351.0" fill="#00ceff"/>
<polygon points="1202.5,331.9 1224.0,319.0 1238.9,304.3 1217.4,318.4" fill="#00ff91"/>
<polygon points="1238.9,304.3 1260.4,296.6 1275.4,284.4 1253.9,290.8" fill="#00ff0a"/>
<polygon points="1275.4,284.4 1296.9,279.2 1311.8,267.0 1290.3,270.9" fill="#5dff00"/>
<polygon points="1311.8,267.0 1333.3,265.7 1348.3,254.8 1326.8,254.8" fill="#b0ff00"/>
<polygon points="1078.2,392.3 1099.7,396.0 1114.6,387.7 1093.1,382.7" fill="#0010ff"/>
<polygon points="1114.6,387.7 1136.1,378.7 1151.1,370.3 1129.6,379.3" fill="#004cff"/>
<polygon points="1151.1,370.3 1172.6,357.5 1187.5,345.3 1166.0,360.7" fill="#00beff"/>
<polygon points="1187.5,345.3 1209.0,333.7 1224.0,319.0 1202.5,331.9" fill="#00ffb0"/>
<polygon points="1224.0,319.0 1245.5,311.3 1260.4,296.6 1238.9,304.3" fill="#00ff28"/>
<polygon points="1260.4,296.6 1281.9,292.7 1296.9,279.2 1275.4,284.4" fill="#45ff00"/>
<polygon points="1296.9,279.2 1318.4,277.9 1333.3,265.7 1311.8,267.0" fill="#9dff00"/>
<polygon points="1333.3,265.7 1354.8,266.8 1369.8,255.9 1348.3,254.8" fill="#dfff00"/>
<polygon points="1063.2,400.7 1084.7,405.7 1099.7,396.0 1078.2,392.3" fill="#000cff"/>
<polygon points="1099.7,396.0 1121.2,387.0 1136.1,378.7 1114.6,387.7" fill="#004cff"/>
<polygon points="1136.1,378.7 1157.6,368.4 1172.6,357.5 1151.1,370.3" fill="#00b4ff"/>
<polygon points="1172.6,357.5 1194.1,347.2 1209.0,333.7 1187.5,345.3" fill="#00ffcc"/>
<polygon points="1209.0,333.7 1230.5,324.8 1245.5,311.3 1224.0,319.0" fill="#00ff49"/>
<polygon points="1245.5,311.3 1267.0,306.1 1281.9,292.7 1260.4,296.6" fill="#29ff00"/>
<polygon points="1281.9,292.7 1303.4,291.3 1318.4,277.9 1296.9,279.2" fill="#85ff00"/>
<polygon points="1318.4,277.9 1339.9,279.0 1354.8,266.8 1333.3,265.7" fill="#ceff00"/>
<polygon points="1354.8,266.8 1376.3,268.0 1391.3,258.4 1369.8,255.9" fill="#fff700"/>
<polygon points="1048.2,409.1 1069.7,414.0 1084.7,405.7 1063.2,400.7" fill="#000aff"/>
<polygon points="1084.7,405.7 1106.2,395.4 1121.2,387.0 1099.7,396.0" fill="#004aff"/>
<polygon points="1121.2,387.0 1142.7,379.3 1157.6,368.4 1136.1,378.7" fill="#00adff"/>
<polygon points="1157.6,368.4 1179.1,361.9 1194.1,347.2 1172.6,357.5" fill="#00ffe4"/>
<polygon points="1194.1,347.2 1215.6,339.5 1230.5,324.8 1209.0,333.7" fill="#00ff68"/>
<polygon points="1230.5,324.8 1252.0,320.8 1267.0,306.1 1245.5,311.3" fill="#0aff00"/>
<polygon points="1267.0,306.1 1288.5,304.7 1303.4,291.3 1281.9,292.7" fill="#6aff00"/>
<polygon points="1303.4,291.3 1324.9,291.2 1339.9,279.0 1318.4,277.9" fill="#b7ff00"/>
<polygon points="1339.9,279.0 1361.4,278.9 1376.3,268.0 1354.8,266.8" fill="#f9ff00"/>
<polygon points="1376.3,268.0 1397.8,270.4 1412.8,260.8 1391.3,258.4" fill="#ffd300"/>
<polygon points="1033.3,417.4 1054.8,422.4 1069.7,414.0 1048.2,409.1" fill="#000aff"/>
<polygon points="1069.7,414.0 1091.2,405.0 1106.2,395.4 1084.7,405.7" fill="#0047ff"/>
<polygon points="1106.2,395.4 1127.7,391.5 1142.7,379.3 1121.2,387.0" fill="#00a4ff"/>
<polygon points="1142.7,379.3 1164.2,378.0 1179.1,361.9 1157.6,368.4" fill="#00fffe"/>
<polygon points="1179.1,361.9 1200.6,355.5 1215.6,339.5 1194.1,347.2" fill="#00ff8a"/>
<polygon points="1215.6,339.5 1237.1,335.6 1252.0,320.8 1230.5,324.8" fill="#00ff16"/>
<polygon points="1252.0,320.8 1273.5,318.2 1288.5,304.7 1267.0,306.1" fill="#4cff00"/>
<polygon points="1288.5,304.7 1310.0,303.4 1324.9,291.2 1303.4,291.3" fill="#9fff00"/>
<polygon points="1324.9,291.2 1346.4,291.1 1361.4,278.9 1339.9,279.0" fill="#e6ff00"/>
<polygon points="1361.4,278.9 1382.9,280.1 1397.8,270.4 1376.3,268.0" fill="#ffdc00"/>
<polygon points="1397.8,270.4 1419.3,269.1 1434.3,259.5 1412.8,260.8" fill="#ffa600"/>
<polygon points="1018.3,425.8 1039.8,430.8 1054.8,422.4 1033.3,417.4" fill="#000aff"/>
<polygon points="1054.8,422.4 1076.3,413.4 1091.2,405.0 1069.7,414.0" fill="#0045ff"/>
<polygon points="1091.2,405.0 1112.7,401.1 1127.7,391.5 1106.2,395.4" fill="#009cff"/>
<polygon points="1127.7,391.5 1149.2,391.4 1164.2,378.0 1142.7,379.3" fill="#00e6ff"/>
<polygon points="1164.2,378.0 1185.7,371.5 1200.6,355.5 1179.1,361.9" fill="#00ffb2"/>
<polygon points="1200.6,355.5 1222.1,350.3 1237.1,335.6 1215.6,339.5" fill="#00ff3b"/>
<polygon points="1237.1,335.6 1258.6,334.2 1273.5,318.2 1252.0,320.8" fill="#2aff00"/>
<polygon points="1273.5,318.2 1295.0,316.9 1310.0,303.4 1288.5,304.7" fill="#85ff00"/>
<polygon points="1310.0,303.4 1331.5,303.3 1346.4,291.1 1324.9,291.2" fill="#d1ff00"/>
<polygon points="1346.4,291.1 1367.9,292.3 1382.9,280.1 1361.4,278.9" fill="#ffeb00"/>
<polygon points="1382.9,280.1 1404.4,278.7 1419.3,269.1 1397.8,270.4" fill="#ffad00"/>
<polygon points="1419.3,269.1 1440.8,266.4 1455.8,256.8 1434.3,259.5" fill="#ff6b00"/>
<polygon points="1003.4,434.2 1024.9,439.1 1039.8,430.8 1018.3,425.8" fill="#000aff"/>
<polygon points="1039.8,430.8 1061.3,423.1 1076.3,413.4 1054.8,422.4" fill="#0043ff"/>
<polygon points="1076.3,413.4 1097.8,412.1 1112.7,401.1 1091.2,405.0" fill="#0095ff"/>
<polygon points="1112.7,401.1 1134.2,403.6 1149.2,391.4 1127.7,391.5" fill="#00d3ff"/>
<polygon points="1149.2,391.4 1170.7,387.5 1185.7,371.5 1164.2,378.0" fill="#00ffd8"/>
<polygon points="1185.7,371.5 1207.2,366.3 1222.1,350.3 1200.6,355.5" fill="#00ff63"/>
<polygon points="1222.1,350.3 1243.6,350.2 1258.6,334.2 1237.1,335.6" fill="#03ff00"/>
<polygon points="1258.6,334.2 1280.1,331.6 1295.0,316.9 1273.5,318.2" fill="#64ff00"/>
<polygon points="1295.0,316.9 1316.5,318.0 1331.5,303.3 1310.0,303.4" fill="#b7ff00"/>
<polygon points="1331.5,303.3 1353.0,304.5 1367.9,292.3 1346.4,291.1" fill="#feff00"/>
<polygon points="1367.9,292.3 1389.4,289.6 1404.4,278.7 1382.9,280.1" fill="#ffb900"/>
<polygon points="1404.4,278.7 1425.9,278.6 1440.8,266.4 1419.3,269.1" fill="#ff7600"/>
<polygon points="1440.8,266.4 1462.3,264.8 1477.3,252.3 1455.8,256.8" fill="#ff2c00"/>
<polygon points="988.4,442.5 1009.9,447.5 1024.9,439.1 1003.4,434.2" fill="#000aff"/>
<polygon points="1024.9,439.1 1046.4,431.4 1061.3,423.1 1039.8,430.8" fill="#0042ff"/>
<polygon points="1061.3,423.1 1082.8,420.4 1097.8,412.1 1076.3,413.4" fill="#008fff"/>
<polygon points="1097.8,412.1 1119.3,415.8 1134.2,403.6 1112.7,401.1" fill="#00c3ff"/>
<polygon points="1134.2,403.6 1155.7,402.2 1170.7,387.5 1149.2,391.4" fill="#00fff7"/>
<polygon points="1170.7,387.5 1192.2,383.6 1207.2,366.3 1185.7,371.5" fill="#00ff8e"/>
<polygon points="1207.2,366.3 1228.7,366.2 1243.6,350.2 1222.1,350.3" fill="#00ff24"/>
<polygon points="1243.6,350.2 1265.1,347.6 1280.1,331.6 1258.6,334.2" fill="#3cff00"/>
<polygon points="1280.1,331.6 1301.6,331.5 1316.5,318.0 1295.0,316.9" fill="#98ff00"/>
<polygon points="1316.5,318.0 1338.0,317.9 1353.0,304.5 1331.5,303.3" fill="#e4ff00"/>
<polygon points="1353.0,304.5 1374.5,301.8 1389.4,289.6 1367.9,292.3" fill="#ffcc00"/>
<polygon points="1389.4,289.6 1410.9,290.8 1425.9,278.6 1404.4,278.7" fill="#ff8500"/>
<polygon points="1425.9,278.6 1447.4,277.7 1462.3,264.8 1440.8,266.4" fill="#ff3f00"/>
<polygon points="973.5,450.9 995.0,455.9 1009.9,447.5 988.4,442.5" fill="#000aff"/>
<polygon points="1009.9,447.5 1031.4,439.8 1046.4,431.4 1024.9,439.1" fill="#0042ff"/>
<polygon points="1046.4,431.4 1067.9,430.1 1082.8,420.4 1061.3,423.1" fill="#008cff"/>
<polygon points="1082.8,420.4 1104.3,425.4 1119.3,415.8 1097.8,412.1" fill="#00b9ff"/>
<polygon points="1119.3,415.8 1140.8,415.7 1155.7,402.2 1134.2,403.6" fill="#00edff"/>
<polygon points="1155.7,402.2 1177.2,399.6 1192.2,383.6 1170.7,387.5" fill="#00ffb7"/>
<polygon points="1192.2,383.6 1213.7,383.5 1228.7,366.2 1207.2,366.3" fill="#00ff51"/>
<polygon points="1228.7,366.2 1250.2,363.5 1265.1,347.6 1243.6,350.2" fill="#13ff00"/>
<polygon points="1265.1,347.6 1286.6,346.2 1301.6,331.5 1280.1,331.6" fill="#76ff00"/>
<polygon points="1301.6,331.5 1323.1,332.6 1338.0,317.9 1316.5,318.0" fill="#c5ff00"/>
<polygon points="1338.0,317.9 1359.5,315.3 1374.5,301.8 1353.0,304.5" fill="#ffe400"/>
<polygon points="1374.5,301.8 1396.0,304.3 1410.9,290.8 1389.4,289.6" fill="#ff9a00"/>
<polygon points="1410.9,290.8 1432.4,291.3 1447.4,277.7 1425.9,278.6" fill="#ff5600"/>
<polygon points="958.5,459.3 980.0,464.2 995.0,455.9 973.5,450.9" fill="#000aff"/>
<polygon points="995.0,455.9 1016.5,448.2 1031.4,439.8 1009.9,447.5" fill="#0042ff"/>
<polygon points="1031.4,439.8 1052.9,438.4 1067.9,430.1 1046.4,431.4" fill="#008aff"/>
<polygon points="1067.9,430.1 1089.4,433.8 1104.3,425.4 1082.8,420.4" fill="#00b6ff"/>
<polygon points="1104.3,425.4 1125.8,427.8 1140.8,415.7 1119.3,415.8" fill="#00daff"/>
<polygon points="1140.8,415.7 1162.3,415.6 1177.2,399.6 1155.7,402.2" fill="#00ffdc"/>
<polygon points="1177.2,399.6 1198.7,399.5 1213.7,383.5 1192.2,383.6" fill="#00ff7e"/>
<polygon points="1213.7,383.5 1235.2,382.1 1250.2,363.5 1228.7,366.2" fill="#00ff1c"/>
<polygon points="1250.2,363.5 1271.7,362.2 1286.6,346.2 1265.1,347.6" fill="#4eff00"/>
<polygon points="1286.6,346.2 1308.1,347.4 1323.1,332.6 1301.6,331.5" fill="#a4ff00"/>
<polygon points="1323.1,332.6 1344.6,330.0 1359.5,315.3 1338.0,317.9" fill="#fbff00"/>
<polygon points="1359.5,315.3 1381.0,317.7 1396.0,304.3 1374.5,301.8" fill="#ffb400"/>
<polygon points="1396.0,304.3 1417.5,304.9 1432.4,291.3 1410.9,290.8" fill="#ff7000"/>
<polygon points="980.0,464.2 1001.5,457.8 1016.5,448.2 995.0,455.9" fill="#0040ff"/>
<polygon points="1016.5,448.2 1038.0,446.8 1052.9,438.4 1031.4,439.8" fill="#008aff"/>
<polygon points="1052.9,438.4 1074.4,442.1 1089.4,433.8 1067.9,430.1" fill="#00b4ff"/>
<polygon points="1089.4,433.8 1110.9,437.5 1125.8,427.8 1104.3,425.4" fill="#00d1ff"/>
<polygon points="1125.8,427.8 1147.3,429.0 1162.3,415.6 1140.8,415.7" fill="#00fff9"/>
<polygon points="1162.3,415.6 1183.8,415.5 1198.7,399.5 1177.2,399.6" fill="#00ffa8"/>
<polygon points="1198.7,399.5 1220.2,398.1 1235.2,382.1 1213.7,383.5" fill="#00ff4a"/>
<polygon points="1235.2,382.1 1256.7,378.2 1271.7,362.2 1250.2,363.5" fill="#21ff00"/>
<polygon points="1271.7,362.2 1293.2,362.1 1308.1,347.4 1286.6,346.2" fill="#80ff00"/>
<polygon points="1308.1,347.4 1329.6,343.5 1344.6,330.0 1323.1,332.6" fill="#daff00"/>
<polygon points="1344.6,330.0 1366.1,331.2 1381.0,317.7 1359.5,315.3" fill="#ffd100"/>
<polygon points="1381.0,317.7 1402.5,317.8 1417.5,304.9 1396.0,304.3" fill="#ff8b00"/>
<polygon points="1001.5,457.8 1023.0,455.2 1038.0,446.8 1016.5,448.2" fill="#0089ff"/>
<polygon points="1038.0,446.8 1059.5,450.5 1074.4,442.1 1052.9,438.4" fill="#00b4ff"/>
<polygon points="1074.4,442.1 1095.9,445.8 1110.9,437.5 1089.4,433.8" fill="#00cfff"/>
<polygon points="1110.9,437.5 1132.4,439.9 1147.3,429.0 1125.8,427.8" fill="#00f4ff"/>
<polygon points="1147.3,429.0 1168.8,428.9 1183.8,415.5 1162.3,415.6" fill="#00ffca"/>
<polygon points="1183.8,415.5 1205.3,414.1 1220.2,398.1 1198.7,399.5" fill="#00ff74"/>
<polygon points="1220.2,398.1 1241.7,394.2 1256.7,378.2 1235.2,382.1" fill="#00ff0c"/>
<polygon points="1256.7,378.2 1278.2,376.8 1293.2,362.1 1271.7,362.2" fill="#5aff00"/>
<polygon points="1293.2,362.1 1314.7,358.2 1329.6,343.5 1308.1,347.4" fill="#b9ff00"/>
<polygon points="1329.6,343.5 1351.1,344.6 1366.1,331.2 1344.6,330.0" fill="#ffef00"/>
<polygon points="1366.1,331.2 1387.6,331.0 1402.5,317.8 1381.0,317.7" fill="#ffa600"/>
<polygon points="1023.0,455.2 1044.5,458.9 1059.5,450.5 1038.0,446.8" fill="#00b4ff"/>
<polygon points="1059.5,450.5 1081.0,454.2 1095.9,445.8 1074.4,442.1" fill="#00cfff"/>
<polygon points="1095.9,445.8 1117.4,449.6 1132.4,439.9 1110.9,437.5" fill="#00edff"/>
<polygon points="1132.4,439.9 1153.9,441.1 1168.8,428.9 1147.3,429.0" fill="#00ffe1"/>
<polygon points="1168.8,428.9 1190.3,427.5 1205.3,414.1 1183.8,415.5" fill="#00ff96"/>
<polygon points="1205.3,414.1 1226.8,408.9 1241.7,394.2 1220.2,398.1" fill="#00ff34"/>
<polygon points="1241.7,394.2 1263.2,392.8 1278.2,376.8 1256.7,378.2" fill="#32ff00"/>
<polygon points="1278.2,376.8 1299.7,372.9 1314.7,358.2 1293.2,362.1" fill="#96ff00"/>
<polygon points="1314.7,358.2 1336.2,358.1 1351.1,344.6 1329.6,343.5" fill="#f2ff00"/>
<polygon points="1351.1,344.6 1372.6,345.2 1387.6,331.0 1366.1,331.2" fill="#ffc200"/>
<polygon points="1044.5,458.9 1066.0,462.6 1081.0,454.2 1059.5,450.5" fill="#00cfff"/>
<polygon points="1081.0,454.2 1102.5,456.7 1117.4,449.6 1095.9,445.8" fill="#00edff"/>
<polygon points="1117.4,449.6 1138.9,450.7 1153.9,441.1 1132.4,439.9" fill="#00ffed"/>
<polygon points="1153.9,441.1 1175.4,439.7 1190.3,427.5 1168.8,428.9" fill="#00ffaf"/>
<polygon points="1190.3,427.5 1211.8,423.6 1226.8,408.9 1205.3,414.1" fill="#00ff56"/>
<polygon points="1226.8,408.9 1248.3,407.6 1263.2,392.8 1241.7,394.2" fill="#0cff00"/>
<polygon points="1263.2,392.8 1284.7,387.6 1299.7,372.9 1278.2,376.8" fill="#72ff00"/>
<polygon points="1299.7,372.9 1321.2,372.8 1336.2,358.1 1314.7,358.2" fill="#d1ff00"/>
<polygon points="1336.2,358.1 1357.7,359.4 1372.6,345.2 1351.1,344.6" fill="#ffe000"/>
<polygon points="1066.0,462.6 1087.5,461.2 1102.5,456.7 1081.0,454.2" fill="#00f4ff"/>
<polygon points="1102.5,456.7 1124.0,460.4 1138.9,450.7 1117.4,449.6" fill="#00fff0"/>
<polygon points="1138.9,450.7 1160.4,450.7 1175.4,439.7 1153.9,441.1" fill="#00ffbe"/>
<polygon points="1175.4,439.7 1196.9,437.1 1211.8,423.6 1190.3,427.5" fill="#00ff72"/>
<polygon points="1211.8,423.6 1233.3,421.0 1248.3,407.6 1226.8,408.9" fill="#00ff15"/>
<polygon points="1248.3,407.6 1269.8,402.3 1284.7,387.6 1263.2,392.8" fill="#4eff00"/>
<polygon points="1284.7,387.6 1306.2,387.5 1321.2,372.8 1299.7,372.9" fill="#afff00"/>
<polygon points="1321.2,372.8 1342.7,373.9 1357.7,359.4 1336.2,358.1" fill="#feff00"/>
<polygon points="1087.5,461.2 1109.0,467.5 1124.0,460.4 1102.5,456.7" fill="#00ffe9"/>
<polygon points="1124.0,460.4 1145.5,459.0 1160.4,450.7 1138.9,450.7" fill="#00ffc5"/>
<polygon points="1160.4,450.7 1181.9,448.0 1196.9,437.1 1175.4,439.7" fill="#00ff85"/>
<polygon points="1196.9,437.1 1218.4,434.4 1233.3,421.0 1211.8,423.6" fill="#00ff32"/>
<polygon points="1233.3,421.0 1254.8,415.8 1269.8,402.3 1248.3,407.6" fill="#2fff00"/>
<polygon points="1269.8,402.3 1291.3,401.0 1306.2,387.5 1284.7,387.6" fill="#8eff00"/>
<polygon points="1306.2,387.5 1327.7,387.5 1342.7,373.9 1321.2,372.8" fill="#ddff00"/>
<polygon points="1109.0,467.5 1130.5,467.4 1145.5,459.0 1124.0,460.4" fill="#00ffc5"/>
<polygon points="1145.5,459.0 1167.0,457.6 1181.9,448.0 1160.4,450.7" fill="#00ff8e"/>
<polygon points="1181.9,448.0 1203.4,445.4 1218.4,434.4 1196.9,437.1" fill="#00ff47"/>
<polygon points="1218.4,434.4 1239.9,428.0 1254.8,415.8 1233.3,421.0" fill="#15ff00"/>
<polygon points="1254.8,415.8 1276.3,414.4 1291.3,401.0 1269.8,402.3" fill="#70ff00"/>
<polygon points="1291.3,401.0 1312.8,400.7 1327.7,387.5 1306.2,387.5" fill="#c0ff00"/>
<polygon points="1130.5,467.4 1152.0,466.0 1167.0,457.6 1145.5,459.0" fill="#00ff90"/>
<polygon points="1167.0,457.6 1188.5,455.0 1203.4,445.4 1181.9,448.0" fill="#00ff51"/>
<polygon points="1203.4,445.4 1224.9,440.2 1239.9,428.0 1218.4,434.4" fill="#00ff00"/>
<polygon points="1239.9,428.0 1261.4,427.9 1276.3,414.4 1254.8,415.8" fill="#56ff00"/>
<polygon points="1276.3,414.4 1297.8,414.3 1312.8,400.7 1291.3,401.0" fill="#a5ff00"/>
<polygon points="1152.0,466.0 1173.5,463.4 1188.5,455.0 1167.0,457.6" fill="#00ff55"/>
<polygon points="1188.5,455.0 1210.0,451.1 1224.9,440.2 1203.4,445.4" fill="#00ff0e"/>
<polygon points="1224.9,440.2 1246.4,440.1 1261.4,427.9 1239.9,428.0" fill="#40ff00"/>
<polygon points="1261.4,427.9 1282.9,427.2 1297.8,414.3 1276.3,414.4" fill="#8aff00"/>
<polygon points="1173.5,463.4 1195.0,460.7 1210.0,451.1 1188.5,455.0" fill="#00ff15"/>
<polygon points="1210.0,451.1 1231.5,451.0 1246.4,440.1 1224.9,440.2" fill="#2fff00"/>
<polygon points="1246.4,440.1 1267.9,438.8 1282.9,427.2 1261.4,427.9" fill="#73ff00"/>
<polygon points="1195.0,460.7 1216.5,461.9 1231.5,451.0 1210.0,451.1" fill="#23ff00"/>
<polygon points="1231.5,451.0 1253.0,449.4 1267.9,438.8 1246.4,440.1" fill="#63ff00"/>
<polygon points="1216.5,461.9 1238.0,459.7 1253.0,449.4 1231.5,451.0" fill="#56ff00"/>
</g>
<circle cx="958.5" cy="459.3" r="6.3" fill="#0000ff" stroke="#000" stroke-width="2"/>
<g font-family="Liberation Sans" font-size="11px">
<text x="953.7" y="489.5" fill="#2a2aff" text-anchor="end">20.00</text>
<text x="1480.5" y="469.4" fill="#2a2aff">20.00</text>
<text x="953.7" y="424.6" fill="#2a2aff" text-anchor="end">40.00</text>
<text x="1480.5" y="404.5" fill="#2a2aff">40.00</text>
<text x="953.7" y="359.8" fill="#2a2aff" text-anchor="end">60.00</text>
<text x="1480.5" y="339.7" fill="#2a2aff">60.00</text>
<text x="953.7" y="294.9" fill="#2a2aff" text-anchor="end">80.00</text>
<text x="1480.5" y="274.8" fill="#2a2aff">80.00</text>
<text x="953.7" y="230.1" fill="#2a2aff" text-anchor="end">100.00</text>
<text x="1480.5" y="210.0" fill="#2a2aff">100.00</text>
<text x="947.5" y="554.0" fill="#000" text-anchor="middle">20</text>
<text x="969.0" y="562.8" fill="#000" text-anchor="middle">25</text>
<text x="990.5" y="571.6" fill="#000" text-anchor="middle">30</text>
<text x="1012.0" y="580.4" fill="#000" text-anchor="middle">35</text>
<text x="1033.5" y="589.2" fill="#000" text-anchor="middle">40</text>
<text x="1055.0" y="598.0" fill="#000" text-anchor="middle">45</text>
<text x="1076.5" y="606.8" fill="#000" text-anchor="middle">50</text>
<text x="1098.0" y="615.6" fill="#000" text-anchor="middle">55</text>
<text x="1119.5" y="624.4" fill="#000" text-anchor="middle">60</text>
<text x="1141.0" y="633.2" fill="#000" text-anchor="middle">65</text>
<text x="1162.5" y="642.0" fill="#000" text-anchor="middle">70</text>
<text x="1184.0" y="650.8" fill="#000" text-anchor="middle">80</text>
<text x="1205.5" y="659.6" fill="#000" text-anchor="middle">90</text>
<text x="1258.6" y="667.5" fill="#ff1a1a" text-anchor="middle">400</text>
<text x="1288.5" y="650.8" fill="#ff1a1a" text-anchor="middle">600</text>
<text x="1318.4" y="634.0" fill="#ff1a1a" text-anchor="middle">800</text>
<text x="1348.3" y="617.3" fill="#ff1a1a" text-anchor="middle">1000</text>
<text x="1378.2" y="600.6" fill="#ff1a1a" text-anchor="middle">1200</text>
<text x="1408.2" y="583.8" fill="#ff1a1a" text-anchor="middle">1400</text>
<text x="1438.1" y="567.1" fill="#ff1a1a" text-anchor="middle">1600</text>
<text x="1468.0" y="550.3" fill="#ff1a1a" text-anchor="middle">1800</text>
<text x="1497.9" y="533.6" fill="#ff1a1a" text-anchor="middle">2000</text>
<text x="1053.5" y="651" fill="#777" font-weight="bold" font-size="12.8px">KPa</text>
<text x="1382.5" y="638" fill="#ff1a1a" font-weight="bold" font-size="12.6px">RPM</text>
</g>
<text x="1217.8" y="68.8" font-family="Liberation Sans" font-size="11.5px" fill="#d2d2d2" text-anchor="middle">TunerPro - Version 5.00</text>
<text x="1218.5" y="92.6" font-family="Liberation Sans" font-size="18.8px" font-weight="bold" fill="#000" text-anchor="middle">VE Table - Low Speed</text>
<rect x="1477.5" y="70.8" width="103" height="24" fill="#fdf7a0" stroke="#333" stroke-width="1.3"/>
<text x="1481" y="87.6" font-family="Liberation Sans" font-size="13.4px" fill="#000">1 Point Selected</text>
</svg>
</body></html>
